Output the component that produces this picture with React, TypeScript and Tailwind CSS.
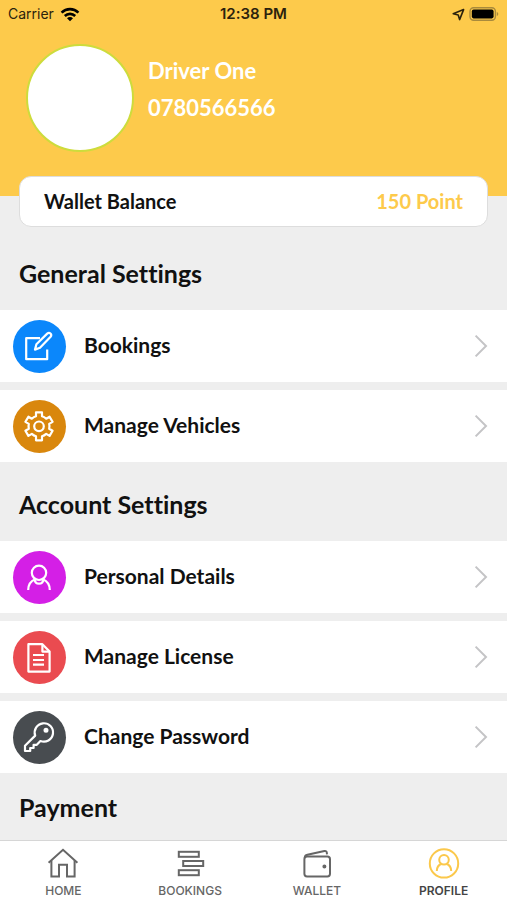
import type { ReactNode } from "react";

type MenuItem = {
  label: string;
  href: string;
  color: string;
  icon: ReactNode;
};

const editIcon = (
  <>
    <path d="M27 18.2H13.2V39.2H34.2V29.5" />
    <path d="M22 29.6l1.400-5.400 10.800-10.600c2.400-2 5.200.8 3.400 3.200L27 27.800z" />
  </>
);

const gearIcon = (
  <g transform="translate(26 26.3)">
    <path d="M-3-10V-14H3V-10Q5.200-9.400 7.200-7.600L10.600-9.600 13.600-4.400 10.200-2.400Q10.800 0 10.200 2.400L13.600 4.400 10.600 9.600 7.200 7.600Q5.200 9.400 3 10V14H-3V10Q-5.200 9.400-7.200 7.600L-10.600 9.600-13.600 4.400-10.200 2.400Q-10.800 0-10.200-2.400L-13.600-4.400-10.600-9.600-7.200-7.600Q-5.200-9.400-3-10z" />
    <circle r="4.8" />
  </g>
);

const personIcon = (
  <>
    <circle cx="26" cy="21.8" r="7.2" />
    <path d="M15.2 39c0-5.400 2.600-9 7-10.800M36.800 39c0-5.400-2.600-9-7-10.800" />
    <path d="M21.600 28.600c.6 5.400 8.200 5.400 8.800 0" />
  </>
);

const documentIcon = (
  <>
    <path d="M15.400 13.200H29.400L36.600 20.600V40.600H15.400z" />
    <path d="M29.400 13.200V20.600H36.600" />
    <path d="M20 24H31M20 29H31M20 33.600H31" />
  </>
);

const keyIcon = (
  <>
    <path d="M22.200 24.600L12 34.800V40H17.200V37H20.600V33.800H23.800L27.400 30A9.200 9.200 0 1 0 22.200 24.600z" />
    <circle cx="33" cy="19.200" r="1.400" fill="currentColor" />
  </>
);

const generalItems: MenuItem[] = [
  { label: "Bookings", href: "#bookings", color: "bg-[#0b87fb]", icon: editIcon },
  { label: "Manage Vehicles", href: "#vehicles", color: "bg-[#d9870d]", icon: gearIcon },
];

const accountItems: MenuItem[] = [
  { label: "Personal Details", href: "#details", color: "bg-[#d41fe6]", icon: personIcon },
  { label: "Manage License", href: "#license", color: "bg-[#ea4b50]", icon: documentIcon },
  { label: "Change Password", href: "#password", color: "bg-[#484c50]", icon: keyIcon },
];

const tabs = [
  {
    label: "HOME",
    href: "#home",
    icon: (
      <>
        <path d="M1.600 15.800L16 2.800 30.400 15.800" />
        <path d="M4.400 13.600V29.400H12V17.800H20V29.400H27.600V13.600" />
      </>
    ),
  },
  {
    label: "BOOKINGS",
    href: "#bookings",
    icon: (
      <>
        <rect x="4.800" y="4.800" width="20" height="5" />
        <rect x="9.200" y="14" width="20" height="5" />
        <rect x="4.800" y="23.200" width="20" height="5" />
      </>
    ),
  },
  {
    label: "WALLET",
    href: "#wallet",
    icon: (
      <>
        <rect x="3.400" y="9.600" width="25.600" height="19.800" rx="2.600" />
        <path d="M3.800 10.600c0-1.600 1-2.400 2.600-2.800L23.400 4c1.400-.3 2.200.3 2.400 1.600L26 7.400" />
        <circle cx="23.400" cy="19.400" r="1" fill="currentColor" />
      </>
    ),
  },
  {
    label: "PROFILE",
    href: "#profile",
    active: true,
    icon: (
      <>
        <circle cx="16" cy="16.400" r="14.200" />
        <circle cx="16" cy="12.800" r="4.800" />
        <path d="M8.800 24c0-3.600 1.800-6 4.800-7.200M23.200 24c0-3.600-1.800-6-4.800-7.200" />
      </>
    ),
  },
];

function StatusBar() {
  return (
    <div className="grid h-7 grid-cols-3 items-center px-2 font-['Inter',sans-serif] text-sm text-[#2b220d]">
      <div className="flex items-center gap-1.5">
        <span>Carrier</span>
        <svg viewBox="0 0 20 15" className="h-[15px] w-5" fill="none" stroke="#000" strokeWidth="2.600">
          <path d="M1.600 5.600a12 12 0 0 1 16.800 0" />
          <path d="M4.800 9a7.400 7.400 0 0 1 10.400 0" />
          <path d="M10 14.200L7 11.200a4.200 4.200 0 0 1 6 0z" fill="#000" stroke="none" />
        </svg>
      </div>
      <span className="text-center text-[15px] font-semibold">12:38 PM</span>
      <div className="flex items-center justify-end gap-1">
        <svg viewBox="0 0 13 13" className="size-[13px]" fill="none" stroke="currentColor" strokeWidth="1.600" strokeLinejoin="round">
          <path d="M11.600 1.600L1.200 5.800 6.200 7 7.600 11.600z" />
        </svg>
        <svg viewBox="0 0 30 14" className="h-[14px] w-[30px]">
          <rect x="1" y=".8" width="25.400" height="12.400" rx="3.600" fill="none" stroke="#a98a3c" strokeWidth="1.400" />
          <rect x="2.800" y="2.600" width="21.800" height="8.800" rx="1.800" fill="#000" />
          <path d="M27.800 5v4c2-.8 2-3.200 0-4z" fill="#a98a3c" />
        </svg>
      </div>
    </div>
  );
}

function SectionTitle({ children }: { children: ReactNode }) {
  return <h2 className="px-[19px] text-[25px] leading-8 font-bold text-[#111]">{children}</h2>;
}

function MenuList({ items }: { items: MenuItem[] }) {
  return (
    <ul className="flex flex-col gap-2">
      {items.map((item) => (
        <li key={item.label}>
          <a href={item.href} className="flex h-[72px] items-center gap-[18px] bg-white pr-4 pl-[13px]">
            <span className={`size-[53px] shrink-0 rounded-full text-white ${item.color}`}>
              <svg viewBox="0 0 53 53" className="size-full" fill="none" stroke="currentColor" strokeWidth="2.200" strokeLinejoin="round">
                {item.icon}
              </svg>
            </span>
            <span className="flex-1 pb-0.5 text-[21px] leading-7 font-bold text-[#111]">{item.label}</span>
            <svg viewBox="0 0 20 24" className="h-6 w-5" fill="none" stroke="#c4c4c6" strokeWidth="2">
              <path d="M4.600 1.600L15 12 4.600 22.400" />
            </svg>
          </a>
        </li>
      ))}
    </ul>
  );
}

function TabBar() {
  return (
    <nav className="grid h-[60px] shrink-0 grid-cols-4 border-t border-[#d6d6d6] bg-white font-['Inter',sans-serif]">
      {tabs.map((tab) => (
        <a
          key={tab.label}
          href={tab.href}
          aria-current={tab.active ? "page" : undefined}
          className="flex flex-col items-center gap-1 pt-1.5 text-[#666]"
        >
          <svg
            viewBox="0 0 32 32"
            className={`size-8 ${tab.active ? "text-[#fbc84b]" : ""}`}
            fill="none"
            stroke="currentColor"
            strokeWidth="2"
          >
            {tab.icon}
          </svg>
          <span className={`text-xs leading-4 ${tab.active ? "font-semibold text-[#444]" : "font-medium"}`}>
            {tab.label}
          </span>
        </a>
      ))}
    </nav>
  );
}

export default function App() {
  return (
    <div className="flex h-screen flex-col bg-[#eee] font-['Lato',sans-serif] [font-variant-ligatures:none]">
      <main className="min-h-0 flex-1 overflow-hidden">
        <header className="h-[196px] bg-[#fdca4b]">
          <StatusBar />
          <div className="flex gap-[14px] px-[26px] pt-4">
            <div className="size-[108px] shrink-0 rounded-full border-2 border-[#cddc3c] bg-white" />
            <div className="flex flex-col gap-[9px] pt-[13px] text-[22px] leading-7 font-bold text-white">
              <p>Driver One</p>
              <p>0780566566</p>
            </div>
          </div>
        </header>

        <div className="relative mx-[19px] -mt-5 flex h-[51px] items-center justify-between rounded-xl border border-[#ddd] bg-white px-6 pb-0.5 text-[20px] font-bold">
          <span className="text-[#111]">Wallet Balance</span>
          <span className="text-[#fdca4b]">150 Point</span>
        </div>

        <section className="pt-[30px]">
          <SectionTitle>General Settings</SectionTitle>
          <div className="pt-[21px]">
            <MenuList items={generalItems} />
          </div>
        </section>
        <section className="pt-[26px]">
          <SectionTitle>Account Settings</SectionTitle>
          <div className="pt-[21px]">
            <MenuList items={accountItems} />
          </div>
        </section>
        <section className="pt-[18px]">
          <SectionTitle>Payment</SectionTitle>
        </section>
      </main>
      <TabBar />
    </div>
  );
}
